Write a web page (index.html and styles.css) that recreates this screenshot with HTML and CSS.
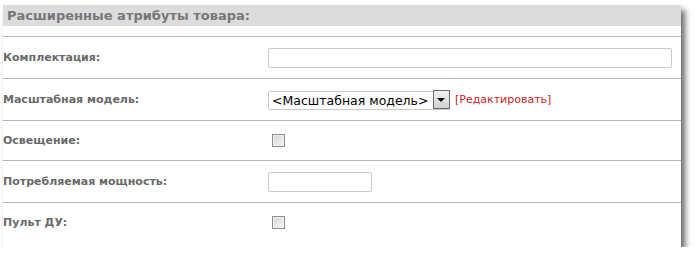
FILE: index.html
```html
<!DOCTYPE html>
<html lang="ru">

<head>
    <meta charset="UTF-8">
    <title>Расширенные атрибуты товара</title>
    <link rel="stylesheet" href="styles.css">
</head>

<body>

    <div class="panel">

        <div class="panel-title">Расширенные атрибуты товара:</div>

        <div class="attr-row">
            <label class="attr-label" for="komplekt">Комплектация:</label>
            <div class="attr-field">
                <input type="text" id="komplekt" class="text-wide">
            </div>
        </div>

        <div class="attr-row">
            <label class="attr-label" for="model">Масштабная модель:</label>
            <div class="attr-field">
                <span class="select-box">
                    <select id="model">
                        <option>&lt;Масштабная модель&gt;</option>
                    </select>
                </span>
                <a href="#" class="edit-link">[Редактировать]</a>
            </div>
        </div>

        <div class="attr-row short">
            <label class="attr-label" for="light">Освещение:</label>
            <div class="attr-field">
                <input type="checkbox" id="light">
            </div>
        </div>

        <div class="attr-row">
            <label class="attr-label" for="power">Потребляемая мощность:</label>
            <div class="attr-field">
                <input type="text" id="power" class="text-small">
            </div>
        </div>

        <div class="attr-row short">
            <label class="attr-label" for="remote">Пульт ДУ:</label>
            <div class="attr-field">
                <input type="checkbox" id="remote">
            </div>
        </div>

    </div>

</body>
</html>
```

FILE: styles.css
```css
body {
    margin: 0;
    background-color: #fff;
    font-family: "DejaVu Sans", Verdana, sans-serif;
}

.panel {
    margin: 5px 0 0 3px;
    width: 678px;
    padding-bottom: 5px;
    background-color: #fff;
    box-shadow: 4px 5px 6px rgba(0, 0, 0, 0.6);
}

.panel-title {
    height: 21px;
    line-height: 21px;
    padding-left: 4px;
    margin-bottom: 10px;
    background-color: #dcdcdc;
    color: #777;
    font-size: 13px;
    font-weight: bold;
}

.attr-row {
    display: flex;
    align-items: center;
    height: 41px;
    border-top: 1px solid #bbb4b4;
}

.attr-row.short {
    height: 39px;
}

.attr-label {
    width: 265px;
    color: #696969;
    font-size: 11px;
    font-weight: bold;
}

.attr-field {
    display: flex;
    align-items: center;
}

/* поля ввода */
.attr-field input[type="text"] {
    box-sizing: border-box;
    height: 20px;
    border: 1px solid #c9c9c9;
    border-radius: 2px;
    background-color: #fff;
    margin: 0;
}

.text-wide {
    width: 404px;
}

.text-small {
    width: 104px;
}

.attr-field input[type="checkbox"] {
    appearance: none;
    box-sizing: border-box;
    width: 13px;
    height: 13px;
    margin: 0 0 0 4px;
    border: 1px solid #8c8c8c;
    background: linear-gradient(135deg, #d4d4d4, #f7f7f7);
    box-shadow: inset 0 0 0 1px #f2f2f2;
}

/* выпадающий список */
.select-box {
    position: relative;
    display: inline-block;
}

.select-box select {
    appearance: none;
    box-sizing: border-box;
    width: 182px;
    height: 19px;
    margin: 0;
    padding: 0 0 0 3px;
    border: 1px solid #c9c9c9;
    border-radius: 2px;
    background-color: #fff;
    color: #000;
    font-family: "DejaVu Sans", Verdana, sans-serif;
    font-size: 12.5px;
}

.select-box::after {
    content: "";
    position: absolute;
    top: 0;
    right: 0;
    box-sizing: border-box;
    width: 17px;
    height: 19px;
    border: 1px solid #6a6a6a;
    background: linear-gradient(#f4f4f4, #d0d0d0);
}

.select-box::before {
    content: "";
    position: absolute;
    top: 8px;
    right: 5px;
    z-index: 1;
    border-left: 4px solid transparent;
    border-right: 4px solid transparent;
    border-top: 4px solid #000;
}

.edit-link {
    margin-left: 5px;
    color: #cc2222;
    font-size: 11px;
    text-decoration: none;
}
```
